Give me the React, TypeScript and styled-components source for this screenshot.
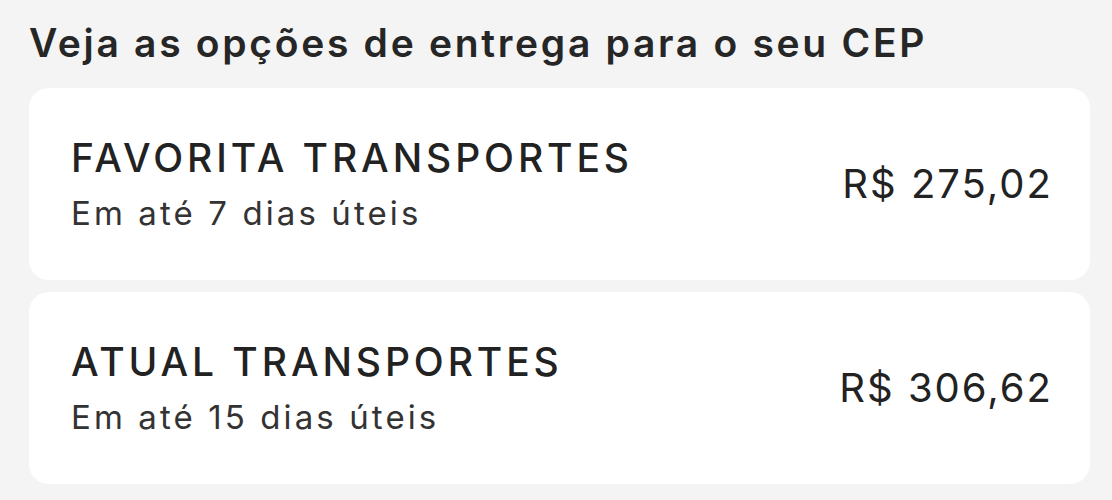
import React from "react";
import styled, { createGlobalStyle } from "styled-components";

const GlobalStyle = createGlobalStyle`
  html, body {
    margin: 0;
    padding: 0;
    background: #f4f4f4;
  }
  body {
    font-family: Inter, "Liberation Sans", sans-serif;
    color: #222;
  }
`;

const Page = styled.section`
  width: 1112px;
  height: 500px;
  box-sizing: border-box;
  padding: 20px 22px 0 29px;
  display: flex;
  flex-direction: column;
  background: #f4f4f4;
`;

const Heading = styled.h2`
  margin: 0 0 22px 0;
  font-size: 39px;
  line-height: 46px;
  font-weight: 600;
  color: #262626;
  letter-spacing: 2.7px;
  white-space: nowrap;
`;

const List = styled.div`
  display: flex;
  flex-direction: column;
  gap: 12px;
`;

const Card = styled.div`
  height: 192px;
  box-sizing: border-box;
  padding: 0 37px 0 42px;
  background: #fff;
  border-radius: 20px;
  display: flex;
  align-items: center;
  justify-content: space-between;
`;

const Info = styled.div`
  display: flex;
  flex-direction: column;
  gap: 14px;
`;

const Carrier = styled.div`
  font-size: 39px;
  line-height: 44px;
  font-weight: 500;
  color: #222;
  letter-spacing: 3.9px;
  white-space: nowrap;
`;

const Deadline = styled.div`
  font-size: 33px;
  line-height: 38px;
  font-weight: 400;
  color: #333;
  letter-spacing: 3.1px;
  white-space: nowrap;
`;

const Price = styled.div`
  font-size: 40px;
  line-height: 46px;
  font-weight: 400;
  color: #222;
  letter-spacing: 2px;
  white-space: nowrap;
`;

type Option = { carrier: string; deadline: string; price: string };

const options: Option[] = [
  { carrier: "FAVORITA TRANSPORTES", deadline: "Em até 7 dias úteis", price: "R$ 275,02" },
  { carrier: "ATUAL TRANSPORTES", deadline: "Em até 15 dias úteis", price: "R$ 306,62" },
];

export default function App() {
  return (
    <>
      <GlobalStyle />
      <Page>
        <Heading>Veja as opções de entrega para o seu CEP</Heading>
        <List>
          {options.map((o) => (
            <Card key={o.carrier}>
              <Info>
                <Carrier>{o.carrier}</Carrier>
                <Deadline>{o.deadline}</Deadline>
              </Info>
              <Price>{o.price}</Price>
            </Card>
          ))}
        </List>
      </Page>
    </>
  );
}
